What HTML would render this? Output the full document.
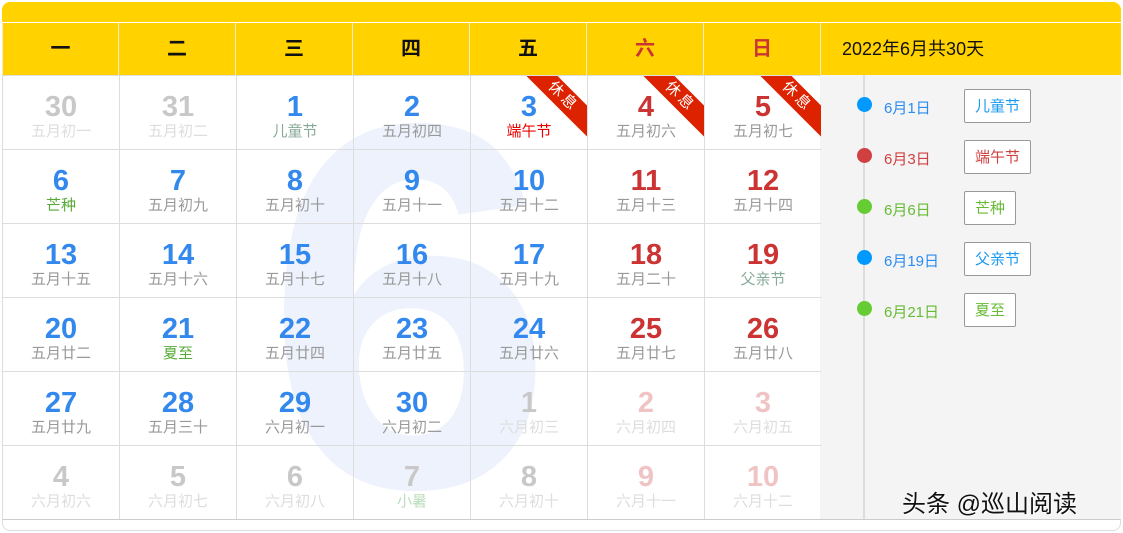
<!DOCTYPE html>
<html><head><meta charset="utf-8"><style>
*{margin:0;padding:0;box-sizing:border-box}
html,body{width:1123px;height:533px;overflow:hidden}
body{background:#fff;font-family:"Liberation Sans","Noto Sans CJK SC",sans-serif;position:relative}
.top{position:absolute;left:2px;top:2px;width:1119px;height:20px;background:#ffd200;border-radius:8px 8px 0 0}
.hdr{position:absolute;top:23px;height:52px;background:#ffd200;border-left:1px solid #f4eccc;text-align:center;line-height:52px;font-size:20px;font-weight:bold;color:#111}
.cell{position:absolute;width:117px;height:74px;border-left:1px solid #ddd;border-top:1px solid #ddd;text-align:center;overflow:hidden}
.n{font-size:29px;font-weight:bold;line-height:30px;margin-top:16px;font-family:"Liberation Sans",sans-serif}
.l{font-size:15px;line-height:20px;color:#999}
.b{color:#3388ee}.r{color:#cc3333}.g{color:#c8c8c8}.p{color:#f0c4c4}
.wmw{position:absolute;left:0;top:75px;width:820px;height:444px;overflow:hidden}
.wm{position:absolute;left:265px;top:-28px;font-size:520px;font-weight:bold;color:#eef2fc;font-family:"Liberation Sans",sans-serif;line-height:520px}
.rib{position:absolute;right:-26px;top:10px;width:100px;height:22px;background:#dd2200;transform:rotate(45deg);color:#fff;font-size:15px;line-height:22px;text-align:center;letter-spacing:3px}
.side{position:absolute;left:820px;top:75px;width:301px;height:445px;background:#f4f4f4}
.vl{position:absolute;left:863px;top:75px;width:2px;height:445px;background:#ddd}
.dot{position:absolute;left:857px;width:15px;height:15px;border-radius:50%}
.dt{position:absolute;left:884px;font-size:15px}
.tag{position:absolute;left:964px;height:34px;border:1px solid #999;background:#fff;font-size:15px;line-height:33px;padding:0 10px;border-radius:2px}
</style></head><body>
<div class="top"></div>
<div class="wmw"><div class="wm">6</div></div>
<div class="hdr" style="left:2px;width:116px">一</div>
<div class="hdr" style="left:118px;width:117px">二</div>
<div class="hdr" style="left:235px;width:117px">三</div>
<div class="hdr" style="left:352px;width:117px">四</div>
<div class="hdr" style="left:469px;width:117px">五</div>
<div class="hdr" style="left:586px;width:117px;color:#cc3333">六</div>
<div class="hdr" style="left:703px;width:117px;color:#cc3333">日</div>
<div class="hdr" style="left:820px;width:301px;text-align:left;padding-left:21px;font-weight:normal;font-size:18px">2022年6月共30天</div>
<div class="side"></div><div class="vl"></div>
<div id="g"></div>
<div class="dot" style="top:97px;background:#0099ff"></div><div class="dt" style="top:97px;color:#2a8cf0">6月1日</div><div class="tag" style="top:89px;color:#1a9af0">儿童节</div>
<div class="dot" style="top:148px;background:#d04040"></div><div class="dt" style="top:148px;color:#d04040">6月3日</div><div class="tag" style="top:140px;color:#d04040">端午节</div>
<div class="dot" style="top:199px;background:#66cc33"></div><div class="dt" style="top:199px;color:#66bb33">6月6日</div><div class="tag" style="top:191px;color:#66bb33">芒种</div>
<div class="dot" style="top:250px;background:#0099ff"></div><div class="dt" style="top:250px;color:#2a8cf0">6月19日</div><div class="tag" style="top:242px;color:#1a9af0">父亲节</div>
<div class="dot" style="top:301px;background:#66cc33"></div><div class="dt" style="top:301px;color:#66bb33">6月21日</div><div class="tag" style="top:293px;color:#66bb33">夏至</div>
<div style="position:absolute;left:902px;top:484px;font-size:24px;color:#111;text-shadow:1px 1px 0 #fff">头条 @巡山阅读</div>
<div style="position:absolute;left:2px;top:519px;width:1119px;height:12px;border:1px solid #ddd;border-top-color:#ccc;border-radius:0 0 8px 8px"></div>
<script>
var d=[
["30","五月初一","g","lg"],["31","五月初二","g","lg"],["1","儿童节","b","#8a9"],["2","五月初四","b"],["3","端午节","b","#e00",1],["4","五月初六","r","",1],["5","五月初七","r","",1],
["6","芒种","b","#5a3"],["7","五月初九","b"],["8","五月初十","b"],["9","五月十一","b"],["10","五月十二","b"],["11","五月十三","r"],["12","五月十四","r"],
["13","五月十五","b"],["14","五月十六","b"],["15","五月十七","b"],["16","五月十八","b"],["17","五月十九","b"],["18","五月二十","r"],["19","父亲节","r","#8a9"],
["20","五月廿二","b"],["21","夏至","b","#5a3"],["22","五月廿四","b"],["23","五月廿五","b"],["24","五月廿六","b"],["25","五月廿七","r"],["26","五月廿八","r"],
["27","五月廿九","b"],["28","五月三十","b"],["29","六月初一","b"],["30","六月初二","b"],["1","六月初三","g","lg"],["2","六月初四","p","lg"],["3","六月初五","p","lg"],
["4","六月初六","g","lg"],["5","六月初七","g","lg"],["6","六月初八","g","lg"],["7","小暑","g","#bdb"],["8","六月初十","g","lg"],["9","六月十一","p","lg"],["10","六月十二","p","lg"]];
var h="";
d.forEach(function(c,i){var x=2+117*(i%7),y=75+74*Math.floor(i/7);
var lc=c[3]?(c[3]=="lg"?"color:#ddd":"color:"+c[3]):"";
h+='<div class="cell" style="left:'+x+'px;top:'+y+'px"><div class="n '+c[2]+'">'+c[0]+'</div><div class="l" style="'+lc+'">'+c[1]+'</div>'+(c[4]?'<div class="rib">休息</div>':'')+'</div>';});
document.getElementById("g").innerHTML=h;
</script>
</body></html>
